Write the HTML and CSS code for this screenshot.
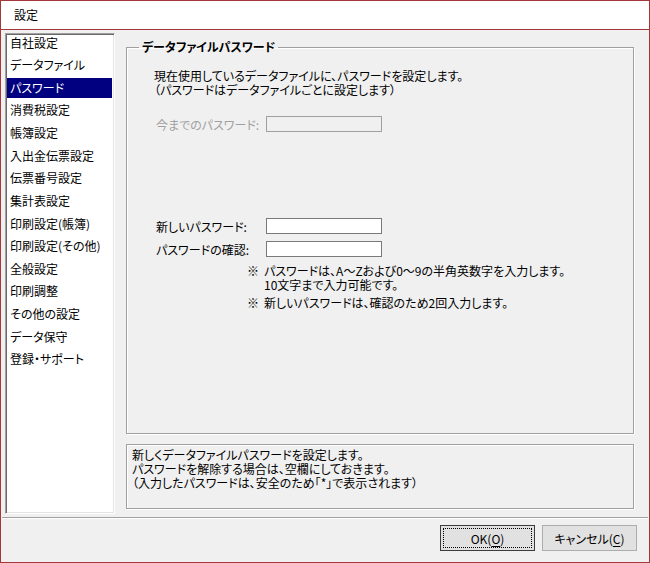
FILE: index.html
```html
<!DOCTYPE html>
<html lang="ja">
<head>
<meta charset="utf-8">
<title>設定</title>
<link rel="stylesheet" href="styles.css">
</head>
<body>
<div class="window">
  <div class="titlebar"><span class="title">設定</span></div>
  <div class="body">
    <div class="listbox">
      <ul class="items">
        <li>自社設定</li>
        <li>データファイル</li>
        <li class="selected">パスワード</li>
        <li>消費税設定</li>
        <li>帳簿設定</li>
        <li>入出金伝票設定</li>
        <li>伝票番号設定</li>
        <li>集計表設定</li>
        <li>印刷設定(帳簿)</li>
        <li>印刷設定(その他)</li>
        <li>全般設定</li>
        <li>印刷調整</li>
        <li>その他の設定</li>
        <li>データ保守</li>
        <li>登録・サポート</li>
      </ul>
    </div>
    <div class="pane">
      <fieldset class="group">
        <legend>データファイルパスワード</legend>
        <p class="intro">現在使用しているデータファイルに、パスワードを設定します。<br>（パスワードはデータファイルごとに設定します）</p>
        <div class="row row-old disabled"><span class="label">今までのパスワード:</span><span class="field"></span></div>
        <div class="row row-new"><span class="label">新しいパスワード:</span><span class="field"></span></div>
        <div class="row row-confirm"><span class="label">パスワードの確認:</span><span class="field"></span></div>
        <div class="notes">
          <div class="note"><span class="mark">※</span><span class="note-text">パスワードは、A～Zおよび0～9の半角英数字を入力します。<br>10文字まで入力可能です。</span></div>
          <div class="note note-2"><span class="mark">※</span><span class="note-text">新しいパスワードは、確認のため2回入力します。</span></div>
        </div>
      </fieldset>
      <div class="desc">新しくデータファイルパスワードを設定します。<br>パスワードを解除する場合は、空欄にしておきます。<br>（入力したパスワードは、安全のため「*」で表示されます）</div>
    </div>
  </div>
  <div class="footer">
    <button class="btn btn-default"><span class="focus">OK(<u>O</u>)</span></button>
    <button class="btn">キャンセル(<u>C</u>)</button>
  </div>
</div>
</body>
</html>
```
FILE: styles.css
```css
* { box-sizing: border-box; }
html, body { margin: 0; padding: 0; background: #ffffff; }
body {
  font-family: "Noto Sans CJK JP", "Noto Sans", sans-serif;
  font-size: 12px;
  color: #000;
  font-feature-settings: "palt";
}
.window {
  width: 650px;
  height: 563px;
  border: 1px solid #a4373a;
  background: #f0f0f0;
  display: flex;
  flex-direction: column;
}
.titlebar {
  height: 29px;
  background: #fff;
  border-bottom: 1px solid #a4373a;
  padding-left: 13px;
  line-height: 28px;
  flex: none;
}
.body {
  height: 487px;
  display: flex;
  padding: 3px 0 0 4px;
  flex: none;
}
.listbox {
  width: 110px;
  height: 481px;
  background: #fff;
  border: 1px solid;
  border-color: #a0a0a0 #fff #fff #a0a0a0;
  box-shadow: inset 1px 1px 0 #696969, inset -1px -1px 0 #e3e3e3;
  padding: 1px 2px 1px 1px;
  overflow: hidden;
}
.items {
  list-style: none;
  margin: -2.5px 0 0 0;
  padding: 0;
}
.items li {
  height: 20px;
  line-height: 19px;
  margin-bottom: 2.64px;
  padding-left: 3px;
  white-space: nowrap;
}
.items li.selected {
  background: #000080;
  color: #fff;
}
.pane {
  width: 508px;
  margin-left: 11px;
  padding-top: 7px;
  display: flex;
  flex-direction: column;
}
.group {
  margin: 0;
  height: 394px;
  border: 1px solid #a0a0a0;
  box-shadow: inset 1px 1px 0 #fff, 1px 1px 0 #fff;
  padding: 15px 0 0 27px;
  min-inline-size: 0;
}
.group legend {
  font-weight: bold;
  line-height: 14px;
  padding: 0 3px;
  margin-left: -15px;
}
.intro {
  margin: 0;
  line-height: 14px;
}
.row {
  display: flex;
  align-items: center;
  height: 16px;
  padding-left: 2px;
}
.row .label {
  width: 110px;
  white-space: nowrap;
}
.row .field {
  width: 116px;
  height: 16px;
  background: #fff;
  border: 1px solid #7a7a7a;
}
.row.disabled .label { color: #a0a0a0; }
.row.disabled .field { background: #f0f0f0; border-color: #a0a0a0; }
.row-old { margin-top: 19px; }
.row-new { margin-top: 86px; }
.row-confirm { margin-top: 7px; }
.notes {
  margin-top: 7px;
  margin-left: 93px;
  line-height: 14px;
}
.note { display: flex; }
.note .mark { width: 17px; flex: none; }
.note-2 { margin-top: 4px; }
.desc {
  margin-top: 10px;
  height: 65px;
  border: 1px solid #a0a0a0;
  box-shadow: inset 1px 1px 0 #fff, 1px 1px 0 #fff;
  padding: 3px 0 0 5px;
  line-height: 14px;
}
.footer {
  flex: 1;
  border-top: 1px solid #a0a0a0;
  box-shadow: inset 0 1px 0 #fff;
  margin: 0 1px;
  padding: 7px 11px 0 0;
  display: flex;
  justify-content: flex-end;
  align-items: flex-start;
  gap: 7px;
}
.btn {
  width: 95px;
  height: 26px;
  background: #e1e1e1;
  border: 1px solid #adadad;
  font: inherit;
  color: #000;
  padding: 0;
  display: flex;
  align-items: center;
  justify-content: center;
}
.btn-default {
  border-color: #3c3c3c;
  padding: 2px;
}
.btn-default .focus {
  flex: 1;
  align-self: stretch;
  display: flex;
  align-items: center;
  justify-content: center;
  border: 1px dotted #000;
}
.btn u { text-decoration-thickness: 1px; text-underline-offset: 2px; }
```
